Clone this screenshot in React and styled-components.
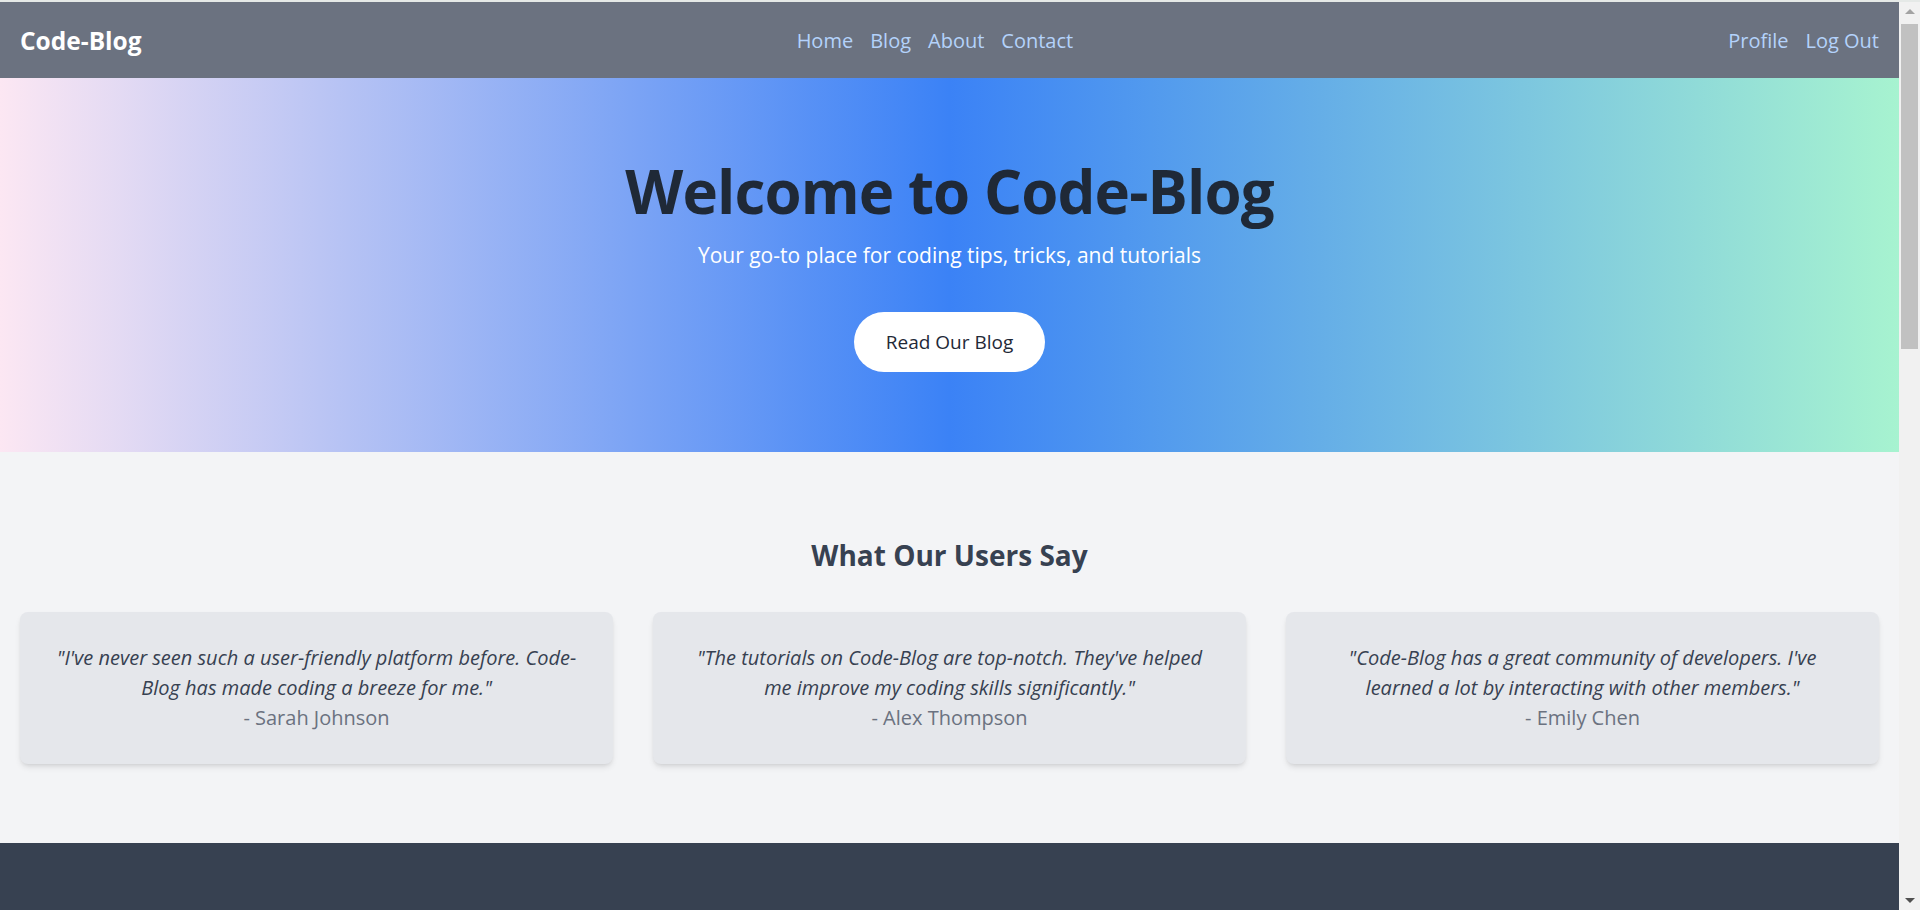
import React from "react";
import styled, { createGlobalStyle } from "styled-components";

const testimonials = [
  {
    quote:
      "I've never seen such a user-friendly platform before. Code-Blog has made coding a breeze for me.",
    author: "Sarah Johnson",
  },
  {
    quote:
      "The tutorials on Code-Blog are top-notch. They've helped me improve my coding skills significantly.",
    author: "Alex Thompson",
  },
  {
    quote:
      "Code-Blog has a great community of developers. I've learned a lot by interacting with other members.",
    author: "Emily Chen",
  },
];

const navLinks = ["Home", "Blog", "About", "Contact"];
const userLinks = ["Profile", "Log Out"];

export default function App() {
  return (
    <>
      <GlobalStyle />
      <Shell>
        <Page>
          <Navbar>
            <Logo href="#">Code-Blog</Logo>
            <NavGroup>
              {navLinks.map((link) => (
                <NavLink key={link} href="#">
                  {link}
                </NavLink>
              ))}
            </NavGroup>
            <NavGroup>
              {userLinks.map((link) => (
                <NavLink key={link} href="#">
                  {link}
                </NavLink>
              ))}
            </NavGroup>
          </Navbar>

          <Hero>
            <HeroTitle>Welcome to Code-Blog</HeroTitle>
            <HeroSubtitle>
              Your go-to place for coding tips, tricks, and tutorials
            </HeroSubtitle>
            <HeroButton href="#">Read Our Blog</HeroButton>
          </Hero>

          <Testimonials>
            <SectionTitle>What Our Users Say</SectionTitle>
            <CardGrid>
              {testimonials.map((t) => (
                <Card key={t.author}>
                  <Quote>"{t.quote}"</Quote>
                  <Author>- {t.author}</Author>
                </Card>
              ))}
            </CardGrid>
          </Testimonials>

          <Footer>
            <FooterText>&copy; 2024 Code-Blog. All rights reserved.</FooterText>
          </Footer>
        </Page>

        <ScrollRail aria-hidden="true">
          <ScrollArrow $dir="up" />
          <ScrollThumb />
          <ScrollArrow $dir="down" />
        </ScrollRail>
      </Shell>
    </>
  );
}

const GlobalStyle = createGlobalStyle`
  * {
    box-sizing: border-box;
  }

  body {
    margin: 0;
    font-family: "Segoe UI", "Open Sans", "Noto Sans", sans-serif;
    background: #f3f4f6;
    overflow: hidden;
  }
`;

const Shell = styled.div`
  display: flex;
  height: 100vh;
  border-top: 2px solid #e5e9e7;
`;

const Page = styled.div`
  flex: 1;
  display: flex;
  flex-direction: column;
  min-width: 0;
  overflow-y: auto;
  scrollbar-width: none;

  &::-webkit-scrollbar {
    display: none;
  }
`;

const ScrollRail = styled.div`
  flex: 0 0 21px;
  display: flex;
  flex-direction: column;
  align-items: center;
  padding: 0 2px;
  background: #f1f1f1;
`;

const ScrollArrow = styled.div`
  flex: 0 0 19px;
  width: 100%;
  display: flex;
  align-items: center;
  justify-content: center;

  &::before {
    content: "";
    width: 0;
    height: 0;
    border-left: 5px solid transparent;
    border-right: 5px solid transparent;
    ${({ $dir }) =>
      $dir === "up"
        ? "border-bottom: 5px solid #a3a3a3;"
        : "border-top: 5px solid #505050;"}
  }

  &:last-child {
    margin-top: auto;
  }
`;

const ScrollThumb = styled.div`
  flex: 0 0 325px;
  width: 100%;
  margin-top: 3px;
  background: #c1c1c1;
`;

const Navbar = styled.nav`
  flex: 0 0 76px;
  display: flex;
  justify-content: space-between;
  align-items: center;
  padding: 0 20px;
  background: #6b7280;
`;

const Logo = styled.a`
  color: #ffffff;
  font-size: 24.5px;
  font-weight: 700;
  text-decoration: none;
`;

const NavGroup = styled.div`
  display: flex;
  align-items: center;
  gap: 17px;
`;

const NavLink = styled.a`
  color: #b4d2fb;
  font-size: 20px;
  text-decoration: none;
`;

const Hero = styled.section`
  display: flex;
  flex-direction: column;
  align-items: center;
  padding: 83px 20px 80px;
  background: linear-gradient(to right, #fce7f3, #3b82f6, #a7f3d0);
  text-align: center;
`;

const HeroTitle = styled.h1`
  margin: 0;
  color: #1f2937;
  font-size: 60px;
  line-height: 60px;
  font-weight: 700;
  letter-spacing: -0.9px;
`;

const HeroSubtitle = styled.p`
  margin: 20px 0 0;
  color: #ffffff;
  font-size: 21px;
  line-height: 28px;
`;

const HeroButton = styled.a`
  display: inline-flex;
  align-items: center;
  justify-content: center;
  margin-top: 43px;
  height: 60px;
  padding: 0 32px;
  border-radius: 9999px;
  background: #ffffff;
  color: #1f2937;
  font-size: 19px;
  font-weight: 500;
  text-decoration: none;
`;

const Testimonials = styled.section`
  padding: 85px 20px 79px;
  background: #f3f4f6;
`;

const SectionTitle = styled.h2`
  margin: 0 0 39px;
  color: #374151;
  font-size: 28px;
  line-height: 36px;
  font-weight: 700;
  text-align: center;
`;

const CardGrid = styled.div`
  display: grid;
  grid-template-columns: repeat(3, 1fr);
  gap: 40px;
`;

const Card = styled.div`
  display: flex;
  flex-direction: column;
  align-items: center;
  padding: 31px 32px;
  border-radius: 8px;
  background: #e5e7eb;
  box-shadow: 0 4px 6px -1px rgba(0, 0, 0, 0.1), 0 2px 4px -2px rgba(0, 0, 0, 0.1);
  text-align: center;
`;

const Quote = styled.p`
  margin: 0;
  color: #374151;
  font-size: 20px;
  line-height: 30px;
  font-style: italic;
`;

const Author = styled.p`
  margin: 0;
  color: #6b7280;
  font-size: 20px;
  line-height: 30px;
`;

const Footer = styled.footer`
  flex: 0 0 auto;
  min-height: 1588px;
  padding: 96px 20px;
  background: #374151;
  text-align: center;
`;

const FooterText = styled.p`
  margin: 0;
  color: #d1d5db;
  font-size: 16px;
`;
